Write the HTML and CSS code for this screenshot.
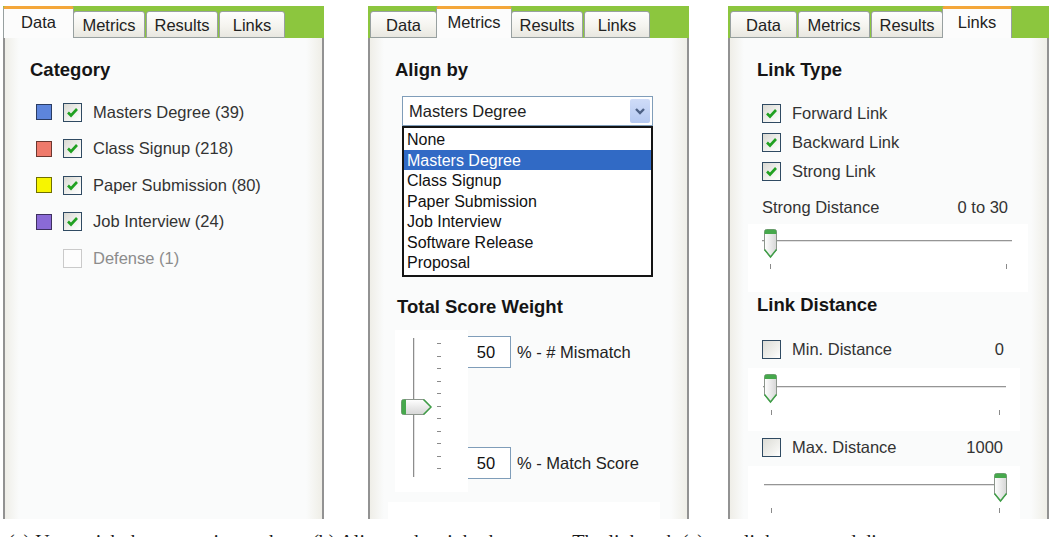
FILE: index.html
```html
<!DOCTYPE html>
<html lang="en">
<head>
<meta charset="utf-8">
<title>Panels</title>
<link rel="stylesheet" href="styles.css">
</head>
<body>
<svg class="defs" width="0" height="0" aria-hidden="true">
  <defs>
    <linearGradient id="thumbFill" x1="0" y1="0" x2="1" y2="0">
      <stop offset="0" stop-color="#ffffff"/>
      <stop offset="1" stop-color="#d6d6d6"/>
    </linearGradient>
    <linearGradient id="thumbFillV" x1="0" y1="0" x2="0" y2="1">
      <stop offset="0" stop-color="#ffffff"/>
      <stop offset="1" stop-color="#d6d6d6"/>
    </linearGradient>
  </defs>
</svg>
<div class="figure">
  <div class="panels">
    <!-- Data panel -->
    <section class="panel">
      <div class="tabs">
        <div class="tab t-data active">Data</div>
        <div class="tab t-metrics">Metrics</div>
        <div class="tab t-results">Results</div>
        <div class="tab t-links">Links</div>
      </div>
      <div class="body">
        <h2 class="heading">Category</h2>
        <ul class="cats">
          <li class="cat"><span class="swatch sw-blue"></span><span class="cb"><svg width="17" height="17" viewBox="0 0 17 17"><path d="M4 8.5 L7 11.5 L13 5" fill="none" stroke="#21a121" stroke-width="2.6"/></svg></span><span class="cat-label">Masters Degree (39)</span></li>
          <li class="cat"><span class="swatch sw-red"></span><span class="cb"><svg width="17" height="17" viewBox="0 0 17 17"><path d="M4 8.5 L7 11.5 L13 5" fill="none" stroke="#21a121" stroke-width="2.6"/></svg></span><span class="cat-label">Class Signup (218)</span></li>
          <li class="cat"><span class="swatch sw-yellow"></span><span class="cb"><svg width="17" height="17" viewBox="0 0 17 17"><path d="M4 8.5 L7 11.5 L13 5" fill="none" stroke="#21a121" stroke-width="2.6"/></svg></span><span class="cat-label">Paper Submission (80)</span></li>
          <li class="cat"><span class="swatch sw-purple"></span><span class="cb"><svg width="17" height="17" viewBox="0 0 17 17"><path d="M4 8.5 L7 11.5 L13 5" fill="none" stroke="#21a121" stroke-width="2.6"/></svg></span><span class="cat-label">Job Interview (24)</span></li>
          <li class="cat disabled"><span class="swatch sw-none"></span><span class="cb cb-disabled"></span><span class="cat-label">Defense (1)</span></li>
        </ul>
      </div>
    </section>

    <!-- Metrics panel -->
    <section class="panel">
      <div class="tabs">
        <div class="tab t-data">Data</div>
        <div class="tab t-metrics active">Metrics</div>
        <div class="tab t-results">Results</div>
        <div class="tab t-links">Links</div>
      </div>
      <div class="body">
        <h2 class="heading">Align by</h2>
        <div class="combo">
          <span class="combo-value">Masters Degree</span>
          <span class="combo-btn"><svg width="18" height="22" viewBox="0 0 18 22"><path d="M5 9 L9 13 L13 9" fill="none" stroke="#4d6185" stroke-width="2.4"/></svg></span>
        </div>
        <ul class="list">
          <li>None</li>
          <li class="selected">Masters Degree</li>
          <li>Class Signup</li>
          <li>Paper Submission</li>
          <li>Job Interview</li>
          <li>Software Release</li>
          <li>Proposal</li>
        </ul>
        <h2 class="heading heading-score">Total Score Weight</h2>
        <div class="score">
          <div class="vslider">
            <div class="vtrack"></div>
            <div class="vticks"><i></i><i></i><i></i><i></i><i></i><i></i><i></i><i></i><i></i><i></i><i></i></div>
            <svg class="thumb-v" width="33" height="18" viewBox="0 0 33 18">
              <path d="M3.5 1.5 H24 L31 9 L24 16.5 H3.5 Q1.5 16.5 1.5 14.5 V3.5 Q1.5 1.5 3.5 1.5 Z" fill="url(#thumbFillV)" stroke="#8c958c"/>
              <path d="M6 1.5 H3.5 Q1.5 1.5 1.5 3.5 V14.5 Q1.5 16.5 3.5 16.5 H6 Z" fill="#46a84c"/>
              <path d="M23.5 1.5 L31 9 L23.5 16.5" fill="none" stroke="#3f9e47" stroke-width="1.5"/>
            </svg>
          </div>
          <div class="weights">
            <div class="wrow"><span class="num">50</span><span class="wlabel">% - # Mismatch</span></div>
            <div class="wrow"><span class="num">50</span><span class="wlabel">% - Match Score</span></div>
          </div>
        </div>
        <div class="strip"></div>
      </div>
    </section>

    <!-- Links panel -->
    <section class="panel p-links">
      <div class="tabs">
        <div class="tab t-data">Data</div>
        <div class="tab t-metrics">Metrics</div>
        <div class="tab t-results">Results</div>
        <div class="tab t-links active">Links</div>
      </div>
      <div class="body body-links">
        <h2 class="heading heading-links">Link Type</h2>
        <ul class="checks">
          <li class="crow"><span class="cb"><svg width="17" height="17" viewBox="0 0 17 17"><path d="M4 8.5 L7 11.5 L13 5" fill="none" stroke="#21a121" stroke-width="2.6"/></svg></span><span class="crow-label">Forward Link</span></li>
          <li class="crow"><span class="cb"><svg width="17" height="17" viewBox="0 0 17 17"><path d="M4 8.5 L7 11.5 L13 5" fill="none" stroke="#21a121" stroke-width="2.6"/></svg></span><span class="crow-label">Backward Link</span></li>
          <li class="crow"><span class="cb"><svg width="17" height="17" viewBox="0 0 17 17"><path d="M4 8.5 L7 11.5 L13 5" fill="none" stroke="#21a121" stroke-width="2.6"/></svg></span><span class="crow-label">Strong Link</span></li>
        </ul>
        <div class="vrow vrow-strong"><span>Strong Distance</span><span>0 to 30</span></div>
        <div class="hslider s1">
          <div class="track"></div>
          <div class="ticks"><i></i><i></i></div>
          <svg class="thumb-h" width="15" height="31" viewBox="0 0 15 31">
            <path d="M1.5 3.5 Q1.5 1.5 3.5 1.5 H11.5 Q13.5 1.5 13.5 3.5 V22 L7.5 29 L1.5 22 Z" fill="url(#thumbFill)" stroke="#8c958c"/>
            <path d="M1.5 6 V3.5 Q1.5 1.5 3.5 1.5 H11.5 Q13.5 1.5 13.5 3.5 V6 Z" fill="#46a84c"/>
            <path d="M1.5 21.5 L7.5 29 L13.5 21.5" fill="none" stroke="#3f9e47" stroke-width="1.5"/>
          </svg>
        </div>
        <h2 class="heading heading-links heading-dist">Link Distance</h2>
        <div class="vrow vrow-min"><span class="vrow-left"><span class="cb cb-empty"></span><span class="crow-label">Min. Distance</span></span><span>0</span></div>
        <div class="hslider s2">
          <div class="track"></div>
          <div class="ticks"><i></i><i></i></div>
          <svg class="thumb-h" width="15" height="31" viewBox="0 0 15 31">
            <path d="M1.5 3.5 Q1.5 1.5 3.5 1.5 H11.5 Q13.5 1.5 13.5 3.5 V22 L7.5 29 L1.5 22 Z" fill="url(#thumbFill)" stroke="#8c958c"/>
            <path d="M1.5 6 V3.5 Q1.5 1.5 3.5 1.5 H11.5 Q13.5 1.5 13.5 3.5 V6 Z" fill="#46a84c"/>
            <path d="M1.5 21.5 L7.5 29 L13.5 21.5" fill="none" stroke="#3f9e47" stroke-width="1.5"/>
          </svg>
        </div>
        <div class="vrow vrow-max"><span class="vrow-left"><span class="cb cb-empty"></span><span class="crow-label">Max. Distance</span></span><span>1000</span></div>
        <div class="hslider s3">
          <div class="track"></div>
          <div class="ticks"><i></i><i></i></div>
          <svg class="thumb-h" width="15" height="31" viewBox="0 0 15 31">
            <path d="M1.5 3.5 Q1.5 1.5 3.5 1.5 H11.5 Q13.5 1.5 13.5 3.5 V22 L7.5 29 L1.5 22 Z" fill="url(#thumbFill)" stroke="#8c958c"/>
            <path d="M1.5 6 V3.5 Q1.5 1.5 3.5 1.5 H11.5 Q13.5 1.5 13.5 3.5 V6 Z" fill="#46a84c"/>
            <path d="M1.5 21.5 L7.5 29 L13.5 21.5" fill="none" stroke="#3f9e47" stroke-width="1.5"/>
          </svg>
        </div>
      </div>
    </section>
  </div>
  <p class="caption">(a) Users pick the categories to show. (b) Align and weight the scores. The links tab (c) sets link types and distances.</p>
</div>
</body>
</html>
```

FILE: styles.css
```css
* { box-sizing: border-box; }

html, body {
  margin: 0;
  background: #ffffff;
}

body {
  width: 1055px;
  height: 537px;
  overflow: hidden;
  font-family: "Liberation Sans", Arial, sans-serif;
  font-size: 16.5px;
  color: #333;
}

.defs { display: block; width: 0; height: 0; }

.figure { padding-top: 6px; }

.panels {
  display: flex;
  padding-left: 3px;
}

.panel {
  width: 321px;
  height: 513px;
  display: flex;
  flex-direction: column;
  flex: none;
}
.panel + .panel { margin-left: 44px; }
.panel.p-links { margin-left: 39px; }

/* Tabs */
.tabs {
  flex: none;
  height: 32px;
  background: #8cc63e;
  display: flex;
  align-items: flex-end;
  gap: 1px;
  padding-left: 2px;
}

.tab {
  height: 27px;
  border: 1px solid #98a0a0;
  border-radius: 3px 3px 0 0;
  background: linear-gradient(#fefefe, #f5f4ef 55%, #e8e7e0);
  display: flex;
  align-items: center;
  justify-content: center;
  color: #222;
  font-size: 16.5px;
  padding-top: 2px;
}
.t-data { width: 67px; }
.t-metrics { width: 72px; }
.t-results { width: 72px; }
.t-links { width: 66px; }

.tab.active {
  height: 32px;
  margin: 0 -2px;
  border-top: 3px solid #f4a73b;
  border-bottom: none;
  background: #fcfcfc;
  padding-top: 0;
  padding-bottom: 3px;
}
.tab.active.t-data { width: 71px; }
.tab.active.t-metrics { width: 76px; }
.tab.active.t-links { width: 70px; }

/* Body */
.body {
  flex: 1;
  border-left: 2px solid #929292;
  border-right: 2px solid #929292;
  background: linear-gradient(to right, #efeee8, #fafbfb 14px, #fafbfb calc(100% - 16px), #efeee7);
  display: flex;
  flex-direction: column;
  align-items: flex-start;
  padding: 21px 0 0 25px;
}

.heading {
  margin: 0;
  font-size: 18.5px;
  font-weight: bold;
  color: #151515;
  line-height: 22px;
}

/* Data panel */
.cats {
  list-style: none;
  margin: 13px 0 0;
  padding: 0;
}
.cat {
  height: 36.5px;
  display: flex;
  align-items: center;
}
.swatch {
  width: 16px;
  height: 16px;
  margin-left: 6px;
  border: 1px solid rgba(0, 0, 0, 0.55);
  flex: none;
}
.sw-blue { background: #5d85dc; }
.sw-red { background: #ef7a6b; }
.sw-yellow { background: #f7f500; }
.sw-purple { background: #8a6ad6; }
.sw-none { visibility: hidden; }

.cb {
  width: 19px;
  height: 19px;
  flex: none;
  border: 1px solid #2f4a62;
  background: linear-gradient(135deg, #d9d9d2, #f6f6f4 70%, #ffffff);
  display: flex;
  align-items: center;
  justify-content: center;
}
.cb svg { display: block; }
.cb-disabled {
  border-color: #cacaca;
  background: #fdfdfd;
}
.cat .cb { margin-left: 11px; }
.cat-label { margin-left: 11px; color: #333; }
.cat.disabled .cat-label { color: #8c8c8c; }

/* Metrics panel */
.combo {
  margin: 15px 0 0 7px;
  width: 251px;
  height: 30px;
  border: 1px solid #7f9db9;
  background: #fff;
  display: flex;
  align-items: center;
  justify-content: space-between;
  padding-left: 6px;
  color: #222;
}
.combo-btn {
  width: 20px;
  height: 24px;
  margin-right: 2px;
  border-radius: 2px;
  background: linear-gradient(#cfdcf8, #b5c9f1);
  display: flex;
  align-items: center;
  justify-content: center;
}

.list {
  list-style: none;
  margin: 0 0 0 7px;
  padding: 1px 0 2px;
  width: 251px;
  border: 2px solid #141414;
  background: #fff;
}
.list li {
  height: 20.5px;
  line-height: 22px;
  padding-left: 3px;
  font-size: 16px;
  color: #111;
  white-space: nowrap;
}
.list li.selected {
  background: #316ac5;
  color: #fff;
}

.heading-score { margin-top: 19.5px; margin-left: 2px; }

.score {
  display: flex;
  margin-top: 12px;
  height: 162px;
  flex: none;
}
.vslider {
  position: relative;
  width: 73px;
  height: 162px;
  background: #fff;
  display: flex;
  align-items: flex-start;
  flex: none;
}
.vtrack {
  margin: 8px 0 0 18px;
  width: 2px;
  height: 139px;
  border-left: 1px solid #8d8d8d;
  border-right: 1px solid #e2e2e2;
}
.vticks {
  margin: 13px 0 0 22px;
  height: 126px;
  display: flex;
  flex-direction: column;
  justify-content: space-between;
}
.vticks i {
  display: block;
  width: 4px;
  height: 1px;
  background: #8a8a8a;
}
.thumb-v {
  position: absolute;
  left: 5px;
  top: 68px;
}

.weights {
  margin-left: -7px;
  padding: 6px 0 13px;
  display: flex;
  flex-direction: column;
  justify-content: space-between;
}
.wrow {
  display: flex;
  align-items: center;
}
.num {
  width: 50px;
  height: 32px;
  border: 1px solid #7f9db9;
  background: #fff;
  text-align: center;
  line-height: 31px;
  color: #111;
}
.wlabel {
  margin-left: 6px;
  color: #222;
}

.strip {
  flex: 1;
  margin: 10px 0 0 -7px;
  width: 272px;
  background: #fff;
}

/* Links panel */
.body-links { padding-left: 18px; }
.heading-links { margin-left: 9px; }

.checks {
  list-style: none;
  margin: 17.5px 0 0 14px;
  padding: 0;
}
.crow {
  height: 29px;
  display: flex;
  align-items: center;
}
.crow-label { margin-left: 11px; color: #333; }

.cb-empty {
  background: linear-gradient(135deg, #dcdcd6, #f3f3f0 70%, #ffffff);
}

.vrow {
  margin-left: 14px;
  height: 22px;
  display: flex;
  align-items: center;
  justify-content: space-between;
  color: #333;
}
.vrow-left {
  display: flex;
  align-items: center;
}
.vrow-strong { width: 246px; margin-top: 10.5px; }
.vrow-min { width: 242px; margin-top: 22px; }
.vrow-max { width: 241px; margin-top: 5px; }

.hslider {
  position: relative;
  background: #fff;
  flex: none;
}
.track {
  height: 2px;
  border-top: 1px solid #959595;
  border-bottom: 1px solid #e2e2e2;
}
.ticks {
  display: flex;
  justify-content: space-between;
}
.ticks i {
  display: block;
  width: 1px;
  height: 5px;
  background: #8a8a8a;
}
.thumb-h { position: absolute; }

.s1 {
  margin-top: 6px;
  width: 280px;
  height: 68px;
  padding-top: 16px;
}
.s1 .track { margin: 0 16px 0 14px; }
.s1 .ticks { margin-top: 22px; padding: 0 21px 0 22px; }
.s1 .thumb-h { left: 15px; top: 4px; }

.heading-dist { margin-top: 2px; }

.s2 {
  margin-top: 8px;
  width: 272px;
  height: 63px;
  padding-top: 18px;
}
.s2 .track { margin: 0 14px 0 15px; }
.s2 .ticks { margin-top: 22px; padding: 0 20px 0 23px; }
.s2 .thumb-h { left: 15px; top: 5px; }

.s3 {
  margin-top: 8px;
  width: 272px;
  flex: 1;
  padding-top: 18px;
}
.s3 .track { margin: 0 26px 0 16px; }
.s3 .ticks { margin-top: 22px; padding: 0 20px 0 23px; }
.s3 .thumb-h { left: 245px; top: 6px; }

/* Caption */
.caption {
  margin: 11px 0 0 8px;
  font-family: "Liberation Serif", "Times New Roman", serif;
  font-size: 20px;
  line-height: 24px;
  color: #1a1a1a;
  white-space: nowrap;
}
```
